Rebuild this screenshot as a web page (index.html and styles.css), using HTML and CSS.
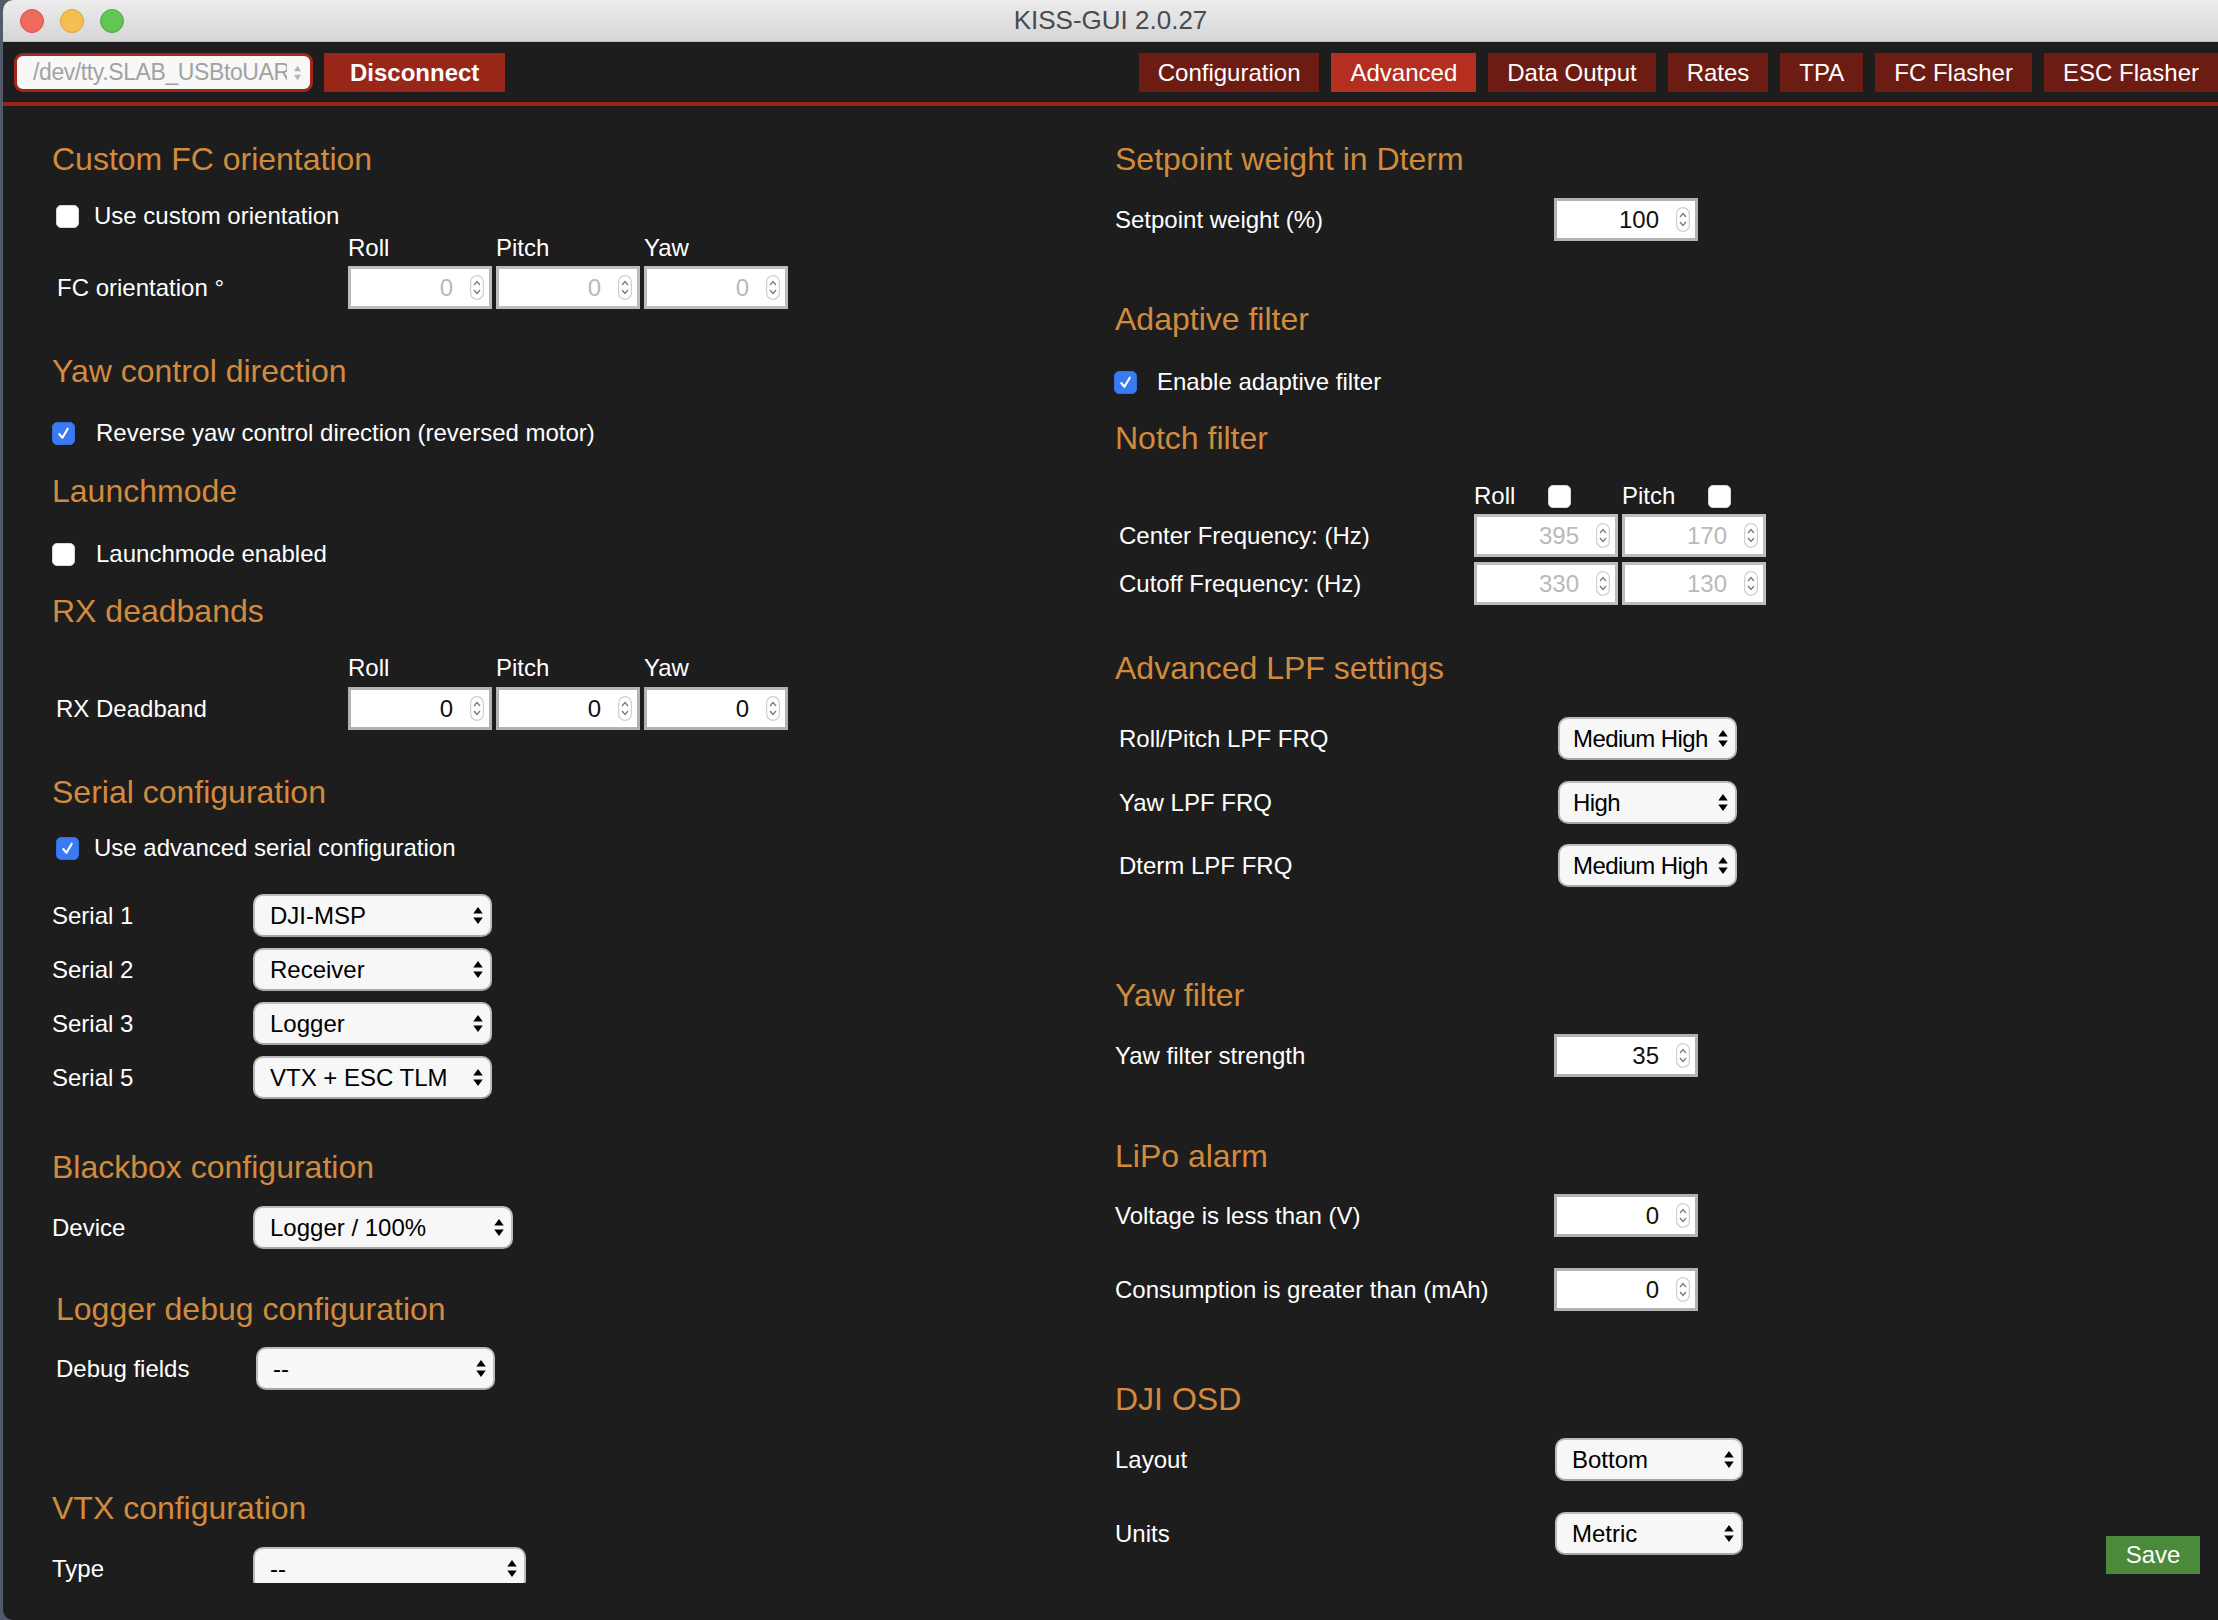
FILE: index.html
```html
<!DOCTYPE html>
<html>
<head>
<meta charset="utf-8">
<title>KISS-GUI 2.0.27</title>
<link rel="stylesheet" href="styles.css">
</head>
<body>
<div class="window">
  <div class="titlebar">
    <div class="lights"><span class="light red"></span><span class="light yellow"></span><span class="light green"></span></div>
    <div class="title">KISS-GUI 2.0.27</div>
    <div></div>
  </div>
  <div class="toolbar">
    <div class="port"><span class="port-text">/dev/tty.SLAB_USBtoUART</span><svg class="port-arrows" viewBox="0 0 10 20"><path d="M1 8 L5 2 L9 8 Z M1 12 L5 18 L9 12 Z" fill="#b5b5b5"/></svg></div>
    <div class="disconnect">Disconnect</div>
    <nav class="tabs">
      <span class="tab">Configuration</span>
      <span class="tab active">Advanced</span>
      <span class="tab">Data Output</span>
      <span class="tab">Rates</span>
      <span class="tab">TPA</span>
      <span class="tab">FC Flasher</span>
      <span class="tab">ESC Flasher</span>
    </nav>
  </div>
  <div class="redline"></div>
  <div class="content">
    <div class="col">
      <h2 class="h mt35">Custom FC orientation</h2>
      <div class="chk mt25 in4 g15"><span class="cb"></span>Use custom orientation</div>
      <div class="axes mt4"><span>Roll</span><span>Pitch</span><span>Yaw</span></div>
      <div class="row mt4">
        <span class="lbl w296 in5">FC orientation °</span>
        <div class="nums">
          <div class="num dis"><span>0</span><svg class="spin" viewBox="0 0 14 25"><rect x="0.6" y="0.6" width="12.8" height="23.8" rx="6.4" fill="#fff" stroke="#cfcfcf" stroke-width="1.2"/><path d="M4 10 L7 6.5 L10 10 M4 15 L7 18.5 L10 15" fill="none" stroke="#7a7a7a" stroke-width="1.3"/></svg></div>
          <div class="num dis"><span>0</span><svg class="spin" viewBox="0 0 14 25"><rect x="0.6" y="0.6" width="12.8" height="23.8" rx="6.4" fill="#fff" stroke="#cfcfcf" stroke-width="1.2"/><path d="M4 10 L7 6.5 L10 10 M4 15 L7 18.5 L10 15" fill="none" stroke="#7a7a7a" stroke-width="1.3"/></svg></div>
          <div class="num dis"><span>0</span><svg class="spin" viewBox="0 0 14 25"><rect x="0.6" y="0.6" width="12.8" height="23.8" rx="6.4" fill="#fff" stroke="#cfcfcf" stroke-width="1.2"/><path d="M4 10 L7 6.5 L10 10 M4 15 L7 18.5 L10 15" fill="none" stroke="#7a7a7a" stroke-width="1.3"/></svg></div>
        </div>
      </div>

      <h2 class="h mt44">Yaw control direction</h2>
      <div class="chk mt30 g21"><span class="cb on"><svg viewBox="0 0 16 16"><path d="M4 8.5 L7 12 L12 3.5" fill="none" stroke="#fff" stroke-width="2" stroke-linecap="round" stroke-linejoin="round"/></svg></span>Reverse yaw control direction (reversed motor)</div>

      <h2 class="h mt26">Launchmode</h2>
      <div class="chk mt31 g21"><span class="cb"></span>Launchmode enabled</div>

      <h2 class="h mt25">RX deadbands</h2>
      <div class="axes mt25"><span>Roll</span><span>Pitch</span><span>Yaw</span></div>
      <div class="row mt5">
        <span class="lbl w296 in4">RX Deadband</span>
        <div class="nums">
          <div class="num"><span>0</span><svg class="spin" viewBox="0 0 14 25"><rect x="0.6" y="0.6" width="12.8" height="23.8" rx="6.4" fill="#fff" stroke="#cfcfcf" stroke-width="1.2"/><path d="M4 10 L7 6.5 L10 10 M4 15 L7 18.5 L10 15" fill="none" stroke="#7a7a7a" stroke-width="1.3"/></svg></div>
          <div class="num"><span>0</span><svg class="spin" viewBox="0 0 14 25"><rect x="0.6" y="0.6" width="12.8" height="23.8" rx="6.4" fill="#fff" stroke="#cfcfcf" stroke-width="1.2"/><path d="M4 10 L7 6.5 L10 10 M4 15 L7 18.5 L10 15" fill="none" stroke="#7a7a7a" stroke-width="1.3"/></svg></div>
          <div class="num"><span>0</span><svg class="spin" viewBox="0 0 14 25"><rect x="0.6" y="0.6" width="12.8" height="23.8" rx="6.4" fill="#fff" stroke="#cfcfcf" stroke-width="1.2"/><path d="M4 10 L7 6.5 L10 10 M4 15 L7 18.5 L10 15" fill="none" stroke="#7a7a7a" stroke-width="1.3"/></svg></div>
        </div>
      </div>

      <h2 class="h mt44">Serial configuration</h2>
      <div class="chk mt24 in4 g15"><span class="cb on"><svg viewBox="0 0 16 16"><path d="M4 8.5 L7 12 L12 3.5" fill="none" stroke="#fff" stroke-width="2" stroke-linecap="round" stroke-linejoin="round"/></svg></span>Use advanced serial configuration</div>
      <div class="row mt32"><span class="lbl w201">Serial 1</span><div class="sel w239"><span>DJI-MSP</span><svg viewBox="0 0 10 20"><path d="M0 8 L5 1 L10 8 Z M0 12 L5 19 L10 12 Z" fill="#000"/></svg></div></div>
      <div class="row mt11"><span class="lbl w201">Serial 2</span><div class="sel w239"><span>Receiver</span><svg viewBox="0 0 10 20"><path d="M0 8 L5 1 L10 8 Z M0 12 L5 19 L10 12 Z" fill="#000"/></svg></div></div>
      <div class="row mt11"><span class="lbl w201">Serial 3</span><div class="sel w239"><span>Logger</span><svg viewBox="0 0 10 20"><path d="M0 8 L5 1 L10 8 Z M0 12 L5 19 L10 12 Z" fill="#000"/></svg></div></div>
      <div class="row mt11"><span class="lbl w201">Serial 5</span><div class="sel w239"><span>VTX + ESC TLM</span><svg viewBox="0 0 10 20"><path d="M0 8 L5 1 L10 8 Z M0 12 L5 19 L10 12 Z" fill="#000"/></svg></div></div>

      <h2 class="h mt50">Blackbox configuration</h2>
      <div class="row mt21"><span class="lbl w201">Device</span><div class="sel w260"><span>Logger / 100%</span><svg viewBox="0 0 10 20"><path d="M0 8 L5 1 L10 8 Z M0 12 L5 19 L10 12 Z" fill="#000"/></svg></div></div>

      <h2 class="h mt42 in4">Logger debug configuration</h2>
      <div class="row mt20"><span class="lbl w204 in4">Debug fields</span><div class="sel w239"><span>--</span><svg viewBox="0 0 10 20"><path d="M0 8 L5 1 L10 8 Z M0 12 L5 19 L10 12 Z" fill="#000"/></svg></div></div>

      <h2 class="h mt100">VTX configuration</h2>
      <div class="row mt21"><span class="lbl w201">Type</span><div class="sel w273"><span>--</span><svg viewBox="0 0 10 20"><path d="M0 8 L5 1 L10 8 Z M0 12 L5 19 L10 12 Z" fill="#000"/></svg></div></div>
    </div>

    <div class="col">
      <h2 class="h mt35">Setpoint weight in Dterm</h2>
      <div class="row mt21"><span class="lbl w439">Setpoint weight (%)</span><div class="num"><span>100</span><svg class="spin" viewBox="0 0 14 25"><rect x="0.6" y="0.6" width="12.8" height="23.8" rx="6.4" fill="#fff" stroke="#cfcfcf" stroke-width="1.2"/><path d="M4 10 L7 6.5 L10 10 M4 15 L7 18.5 L10 15" fill="none" stroke="#7a7a7a" stroke-width="1.3"/></svg></div></div>

      <h2 class="h mt60">Adaptive filter</h2>
      <div class="chk mt31 out1 g20"><span class="cb on"><svg viewBox="0 0 16 16"><path d="M4 8.5 L7 12 L12 3.5" fill="none" stroke="#fff" stroke-width="2" stroke-linecap="round" stroke-linejoin="round"/></svg></span>Enable adaptive filter</div>

      <h2 class="h mt24">Notch filter</h2>
      <div class="notch-head mt26">
        <span class="nh"><span>Roll</span><span class="cb"></span></span>
        <span class="nh"><span>Pitch</span><span class="cb"></span></span>
      </div>
      <div class="row mt4">
        <span class="lbl w359 in4">Center Frequency: (Hz)</span>
        <div class="nums">
          <div class="num dis"><span>395</span><svg class="spin" viewBox="0 0 14 25"><rect x="0.6" y="0.6" width="12.8" height="23.8" rx="6.4" fill="#fff" stroke="#cfcfcf" stroke-width="1.2"/><path d="M4 10 L7 6.5 L10 10 M4 15 L7 18.5 L10 15" fill="none" stroke="#7a7a7a" stroke-width="1.3"/></svg></div>
          <div class="num dis"><span>170</span><svg class="spin" viewBox="0 0 14 25"><rect x="0.6" y="0.6" width="12.8" height="23.8" rx="6.4" fill="#fff" stroke="#cfcfcf" stroke-width="1.2"/><path d="M4 10 L7 6.5 L10 10 M4 15 L7 18.5 L10 15" fill="none" stroke="#7a7a7a" stroke-width="1.3"/></svg></div>
        </div>
      </div>
      <div class="row mt5">
        <span class="lbl w359 in4">Cutoff Frequency: (Hz)</span>
        <div class="nums">
          <div class="num dis"><span>330</span><svg class="spin" viewBox="0 0 14 25"><rect x="0.6" y="0.6" width="12.8" height="23.8" rx="6.4" fill="#fff" stroke="#cfcfcf" stroke-width="1.2"/><path d="M4 10 L7 6.5 L10 10 M4 15 L7 18.5 L10 15" fill="none" stroke="#7a7a7a" stroke-width="1.3"/></svg></div>
          <div class="num dis"><span>130</span><svg class="spin" viewBox="0 0 14 25"><rect x="0.6" y="0.6" width="12.8" height="23.8" rx="6.4" fill="#fff" stroke="#cfcfcf" stroke-width="1.2"/><path d="M4 10 L7 6.5 L10 10 M4 15 L7 18.5 L10 15" fill="none" stroke="#7a7a7a" stroke-width="1.3"/></svg></div>
        </div>
      </div>

      <h2 class="h mt45">Advanced LPF settings</h2>
      <div class="row mt31"><span class="lbl w443 in4">Roll/Pitch LPF FRQ</span><div class="sel w179"><span>Medium High</span><svg viewBox="0 0 10 20"><path d="M0 8 L5 1 L10 8 Z M0 12 L5 19 L10 12 Z" fill="#000"/></svg></div></div>
      <div class="row mt21"><span class="lbl w443 in4">Yaw LPF FRQ</span><div class="sel w179"><span>High</span><svg viewBox="0 0 10 20"><path d="M0 8 L5 1 L10 8 Z M0 12 L5 19 L10 12 Z" fill="#000"/></svg></div></div>
      <div class="row mt20"><span class="lbl w443 in4">Dterm LPF FRQ</span><div class="sel w179"><span>Medium High</span><svg viewBox="0 0 10 20"><path d="M0 8 L5 1 L10 8 Z M0 12 L5 19 L10 12 Z" fill="#000"/></svg></div></div>

      <h2 class="h mt90">Yaw filter</h2>
      <div class="row mt21"><span class="lbl w439">Yaw filter strength</span><div class="num"><span>35</span><svg class="spin" viewBox="0 0 14 25"><rect x="0.6" y="0.6" width="12.8" height="23.8" rx="6.4" fill="#fff" stroke="#cfcfcf" stroke-width="1.2"/><path d="M4 10 L7 6.5 L10 10 M4 15 L7 18.5 L10 15" fill="none" stroke="#7a7a7a" stroke-width="1.3"/></svg></div></div>

      <h2 class="h mt61">LiPo alarm</h2>
      <div class="row mt20"><span class="lbl w439">Voltage is less than (V)</span><div class="num"><span>0</span><svg class="spin" viewBox="0 0 14 25"><rect x="0.6" y="0.6" width="12.8" height="23.8" rx="6.4" fill="#fff" stroke="#cfcfcf" stroke-width="1.2"/><path d="M4 10 L7 6.5 L10 10 M4 15 L7 18.5 L10 15" fill="none" stroke="#7a7a7a" stroke-width="1.3"/></svg></div></div>
      <div class="row mt31"><span class="lbl w439">Consumption is greater than (mAh)</span><div class="num"><span>0</span><svg class="spin" viewBox="0 0 14 25"><rect x="0.6" y="0.6" width="12.8" height="23.8" rx="6.4" fill="#fff" stroke="#cfcfcf" stroke-width="1.2"/><path d="M4 10 L7 6.5 L10 10 M4 15 L7 18.5 L10 15" fill="none" stroke="#7a7a7a" stroke-width="1.3"/></svg></div></div>

      <h2 class="h mt70">DJI OSD</h2>
      <div class="row mt21"><span class="lbl w440">Layout</span><div class="sel w188"><span>Bottom</span><svg viewBox="0 0 10 20"><path d="M0 8 L5 1 L10 8 Z M0 12 L5 19 L10 12 Z" fill="#000"/></svg></div></div>
      <div class="row mt31"><span class="lbl w440">Units</span><div class="sel w188"><span>Metric</span><svg viewBox="0 0 10 20"><path d="M0 8 L5 1 L10 8 Z M0 12 L5 19 L10 12 Z" fill="#000"/></svg></div></div>
    </div>
  </div>
  <div class="footer"></div>
  <div class="save">Save</div>
</div>
</body>
</html>
```

FILE: styles.css
```css
* { box-sizing: border-box; }

body {
  margin: 0;
  background: #525a6b;
  font-family: "Liberation Sans", Arial, Helvetica, sans-serif;
  overflow: hidden;
}

.window {
  margin-left: 3px;
  height: 1620px;
  background: #1d1d1d;
  border-radius: 10px 0 0 10px;
  overflow: hidden;
  position: relative;
  display: flex;
  flex-direction: column;
}

/* title bar */
.titlebar {
  height: 42px;
  flex: none;
  background: linear-gradient(#ececec, #d6d6d6);
  border-bottom: 1px solid #bdbdbd;
  display: grid;
  grid-template-columns: 1fr auto 1fr;
  align-items: center;
}
.lights {
  display: flex;
  gap: 16px;
  padding-left: 17px;
}
.light {
  width: 24px;
  height: 24px;
  border-radius: 50%;
}
.light.red { background: #ee6a5f; border: 1px solid #d6544b; }
.light.yellow { background: #f5be4f; border: 1px solid #d9a23c; }
.light.green { background: #62c655; border: 1px solid #4ea941; }
.title {
  font-size: 26px;
  color: #4b4b4b;
}

/* toolbar */
.toolbar {
  height: 60px;
  flex: none;
  display: flex;
  align-items: center;
  padding-left: 11px;
  padding-top: 1px;
}
.port {
  width: 299px;
  height: 39px;
  border: 3px solid #a3281b;
  border-radius: 9px;
  background: #f8f8f8;
  display: flex;
  align-items: center;
  padding: 0 8px 0 16px;
}
.port-text {
  flex: 1;
  overflow: hidden;
  white-space: nowrap;
  font-size: 23px;
  letter-spacing: -0.4px;
  color: #a2a2a2;
}
.port-arrows {
  width: 9px;
  height: 18px;
  margin-left: 6px;
  flex: none;
}
.disconnect {
  margin-left: 11px;
  height: 39px;
  padding: 0 26px;
  background: #982619;
  color: #fff;
  font-weight: bold;
  font-size: 24px;
  display: flex;
  align-items: center;
}
.tabs {
  margin-left: auto;
  display: flex;
  gap: 12px;
}
.tab {
  height: 39px;
  padding: 0 19px;
  background: #6d1c14;
  color: #fff;
  font-size: 24px;
  display: flex;
  align-items: center;
  white-space: nowrap;
}
.tab.active { background: #b52f20; }

.redline {
  height: 4px;
  flex: none;
  background: #9a2619;
}

/* content */
.content {
  height: 1477px;
  flex: none;
  overflow: hidden;
  display: grid;
  grid-template-columns: 1063px 1fr;
  padding-left: 49px;
  color: #fff;
}
.footer { flex: 1; }

.col {
  display: flex;
  flex-direction: column;
  align-items: flex-start;
}

.h {
  margin: 0;
  font-size: 32px;
  line-height: 36px;
  height: 36px;
  font-weight: normal;
  color: #d28b3d;
  white-space: nowrap;
}

.chk {
  height: 28px;
  display: flex;
  align-items: center;
  font-size: 24px;
  white-space: nowrap;
}
.g15 .cb { margin-right: 15px; }
.g20 .cb { margin-right: 20px; }
.g21 .cb { margin-right: 21px; }

.cb {
  width: 23px;
  height: 23px;
  border-radius: 5px;
  background: #fff;
  border: 1px solid #d8d8d8;
  display: flex;
  align-items: center;
  justify-content: center;
  flex: none;
}
.cb.on {
  background: #3a7bf4;
  border-color: #3270e0;
}
.cb svg { width: 17px; height: 17px; }

.axes {
  height: 28px;
  display: flex;
  gap: 4px;
  padding-left: 296px;
  font-size: 24px;
  align-items: center;
}
.axes span { width: 144px; }

.row {
  display: flex;
  align-items: center;
  height: 43px;
  font-size: 24px;
}
.lbl {
  flex: none;
  white-space: nowrap;
}
.w201 { width: 201px; }
.w204 { width: 204px; }
.w296 { width: 296px; }
.w359 { width: 359px; }
.w439 { width: 439px; }
.w440 { width: 440px; }
.w443 { width: 443px; }

.in4 { padding-left: 4px; }
.in5 { padding-left: 5px; }
.out1 { margin-left: -1px; }

.nums {
  display: flex;
  gap: 4px;
}
.num {
  width: 144px;
  height: 43px;
  border: 3px solid #b2b2b2;
  background: #fff;
  display: flex;
  align-items: center;
  justify-content: flex-end;
  padding-right: 5px;
  color: #111;
  font-size: 24px;
}
.num span { margin-right: 17px; }
.num.dis { color: #b9b9b9; border-color: #bdbdbd; }
.spin { width: 14px; height: 25px; flex: none; }

.sel {
  height: 43px;
  border: 2px solid #bcbcbc;
  border-bottom-color: #a6a6a6;
  border-radius: 10px;
  background: #f7f7f7;
  display: flex;
  align-items: center;
  padding: 0 7px 0 15px;
  font-size: 24px;
  color: #000;
}
.sel span { flex: 1; white-space: nowrap; }
.sel svg { width: 10px; height: 19px; flex: none; }
.w179 { width: 179px; padding-left: 13px; }
.w179 span { letter-spacing: -0.6px; }
.w188 { width: 188px; }
.w239 { width: 239px; }
.w260 { width: 260px; }
.w273 { width: 273px; }

.notch-head {
  height: 28px;
  display: flex;
  gap: 4px;
  padding-left: 359px;
  font-size: 24px;
}
.nh {
  width: 144px;
  display: flex;
  align-items: center;
  gap: 33px;
}

.save {
  position: absolute;
  right: 18px;
  bottom: 46px;
  width: 94px;
  height: 38px;
  background: #4b8a3a;
  color: #fff;
  font-size: 24px;
  display: flex;
  align-items: center;
  justify-content: center;
}

/* vertical spacing */
.mt4 { margin-top: 4px; }
.mt5 { margin-top: 5px; }
.mt11 { margin-top: 11px; }
.mt20 { margin-top: 20px; }
.mt21 { margin-top: 21px; }
.mt24 { margin-top: 24px; }
.mt25 { margin-top: 25px; }
.mt26 { margin-top: 26px; }
.mt30 { margin-top: 30px; }
.mt31 { margin-top: 31px; }
.mt32 { margin-top: 32px; }
.mt35 { margin-top: 35px; }
.mt42 { margin-top: 42px; }
.mt44 { margin-top: 44px; }
.mt45 { margin-top: 45px; }
.mt50 { margin-top: 50px; }
.mt60 { margin-top: 60px; }
.mt61 { margin-top: 61px; }
.mt70 { margin-top: 70px; }
.mt90 { margin-top: 90px; }
.mt100 { margin-top: 100px; }
```
